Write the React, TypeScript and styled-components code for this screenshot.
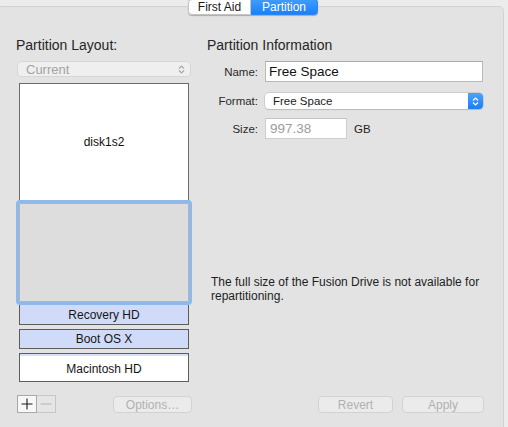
import React from "react";
import styled, { createGlobalStyle } from "styled-components";

const Global = createGlobalStyle`
  html, body { margin: 0; padding: 0; background: #ececec; }
  body { font-family: "Liberation Sans", Arial, sans-serif; color: #1e1e1e; }
  * { box-sizing: border-box; }
`;

const Window = styled.div`
  position: relative;
  width: 508px;
  height: 427px;
  overflow: hidden;
  background: #ececec;
  padding-top: 6px;
`;

const Segmented = styled.div`
  position: absolute;
  top: -1px;
  left: 188px;
  display: flex;
  height: 16px;
  border-radius: 4px;
  box-shadow: 0 0.5px 1px rgba(0, 0, 0, 0.25);
`;

const Segment = styled.div<{ $active?: boolean }>`
  display: flex;
  align-items: center;
  justify-content: center;
  width: ${(p) => (p.$active ? 67 : 63)}px;
  font-size: 12px;
  line-height: 16px;
  color: ${(p) => (p.$active ? "#ffffff" : "#1a1a1a")};
  background: ${(p) => (p.$active ? "linear-gradient(#3f9cfd, #1a80fb)" : "#ffffff")};
  border: 1px solid ${(p) => (p.$active ? "#2a86f5" : "#c4c4c4")};
  border-left-width: ${(p) => (p.$active ? 0 : 1)}px;
  border-radius: ${(p) => (p.$active ? "0 4px 4px 0" : "4px 0 0 4px")};
`;

const Panel = styled.div`
  margin-left: -4px;
  width: 508px;
  height: 440px;
  border: 1px solid #d2d2d2;
  border-radius: 5px;
  background: #e3e3e3;
  display: flex;
  padding: 30px 0 0 19px;
`;

const LeftCol = styled.div`
  flex: none;
  width: 176px;
  display: flex;
  flex-direction: column;
`;

const RightCol = styled.div`
  flex: none;
  width: 296px;
  margin-left: 15px;
  padding-right: 19px;
  display: flex;
  flex-direction: column;
`;

const Heading = styled.div`
  font-size: 14px;
  line-height: 16px;
  height: 16px;
  color: #262626;
  white-space: nowrap;
`;

const DisabledPopup = styled.div`
  margin: 8px 0 0 1px;
  width: 174px;
  height: 16px;
  display: flex;
  align-items: center;
  justify-content: space-between;
  padding: 0 5px 0 8px;
  background: #efefef;
  border: 1px solid #d6d6d6;
  border-radius: 4px;
  font-size: 13px;
  color: #a3a3a3;
`;

const Map = styled.div`
  margin: 6px 0 0 3px;
  width: 170px;
  display: flex;
  flex-direction: column;
`;

const DiskBox = styled.div`
  height: 117px;
  background: #ffffff;
  border: 1px solid #6b6b6b;
  border-bottom: none;
  display: flex;
  align-items: center;
  justify-content: center;
  font-size: 12px;
  color: #111;
`;

const SelectedBox = styled.div`
  margin: 0 -3px;
  height: 105px;
  border: 3px solid #8fb8eb;
  border-radius: 4px;
  background: #dddddd;
  box-shadow: inset 0 0 0 1px #b4b4b4;
`;

const PartRow = styled.div<{ $h: number; $top?: boolean; $white?: boolean; $gap?: number }>`
  margin-top: ${(p) => p.$gap ?? 0}px;
  height: ${(p) => p.$h}px;
  display: flex;
  align-items: center;
  justify-content: center;
  font-size: 12px;
  color: #151515;
  background: ${(p) => (p.$white ? "#ffffff" : "#d0dbfa")};
  border: 1px solid #5c5c5c;
  border-top-width: ${(p) => (p.$top ? 1 : 0)}px;
  box-shadow: ${(p) => (p.$white ? "inset 0 2px 0 #d6e0fb" : "none")};
  padding-top: ${(p) => (p.$white ? 2 : 0)}px;
`;

const LeftFooter = styled.div`
  margin-top: 13px;
  display: flex;
  justify-content: space-between;
  align-items: flex-start;
`;

const PlusMinus = styled.div`
  margin-left: 1px;
  display: flex;
`;

const SquareBtn = styled.div<{ $enabled?: boolean }>`
  width: ${(p) => (p.$enabled ? 20 : 19)}px;
  height: 18px;
  display: flex;
  align-items: center;
  justify-content: center;
  background: ${(p) => (p.$enabled ? "#f7f7f7" : "#e5e5e5")};
  border: 1px solid ${(p) => (p.$enabled ? "#a8a8a8" : "#c6c6c6")};
  border-left-width: ${(p) => (p.$enabled ? 1 : 0)}px;
`;

const PushButton = styled.div<{ $w: number }>`
  width: ${(p) => p.$w}px;
  height: 17px;
  margin-top: 1px;
  display: flex;
  align-items: center;
  justify-content: center;
  background: #ebebeb;
  border: 1px solid #d2d2d2;
  border-radius: 4px;
  font-size: 12px;
  color: #b1b1b1;
`;

const Form = styled.div`
  margin-top: 8px;
  display: grid;
  grid-template-columns: 51px 218px;
  column-gap: 7px;
  align-items: center;
`;

const Label = styled.div<{ $gap?: number }>`
  margin-top: ${(p) => p.$gap ?? 0}px;
  text-align: right;
  font-size: 11.5px;
  color: #2a2a2a;
`;

const Cell = styled.div<{ $gap?: number }>`
  margin-top: ${(p) => p.$gap ?? 0}px;
  display: flex;
  align-items: center;
`;

const TextField = styled.div<{ $w?: number; $dim?: boolean }>`
  width: ${(p) => (p.$w ? `${p.$w}px` : "100%")};
  height: 21px;
  display: flex;
  align-items: center;
  padding-left: ${(p) => (p.$dim ? 4 : 3)}px;
  background: #ffffff;
  border: 1px solid ${(p) => (p.$dim ? "#cfcfcf" : "#b9b9b9")};
  border-top-color: ${(p) => (p.$dim ? "#c4c4c4" : "#a9a9a9")};
  font-size: 13.5px;
  color: ${(p) => (p.$dim ? "#9c9c9c" : "#111")};
`;

const Popup = styled.div`
  width: 100%;
  height: 16px;
  display: flex;
  align-items: stretch;
  background: #ffffff;
  border-radius: 4px;
  box-shadow: 0 0 0 0.5px #b7b7b7, 0 1px 1px rgba(0, 0, 0, 0.15);
  font-size: 11.5px;
  color: #1a1a1a;
`;

const PopupText = styled.div`
  flex: 1;
  display: flex;
  align-items: center;
  padding-left: 8px;
`;

const Stepper = styled.div`
  width: 15px;
  display: flex;
  align-items: center;
  justify-content: center;
  border-radius: 0 4px 4px 0;
  background: linear-gradient(#4aa3fd, #1a7ef8);
`;

const Unit = styled.span`
  margin-left: 7px;
  font-size: 11.5px;
  color: #222;
`;

const Message = styled.div`
  margin: 137px 0 0 4px;
  width: 273px;
  font-size: 12px;
  line-height: 13.5px;
  color: #1e1e1e;
`;

const RightFooter = styled.div`
  margin-top: 92px;
  display: flex;
  justify-content: flex-end;
  gap: 9px;
`;

const Chevrons = ({ color }: { color: string }) => (
  <svg width="7" height="11" viewBox="0 0 7 11">
    <path d="M1 4.5 L3.5 2 L6 4.5 M1 6.5 L3.5 9 L6 6.5" fill="none" stroke={color} strokeWidth="1.2" />
  </svg>
);

export default function App() {
  return (
    <>
      <Global />
      <Window>
        <Panel>
          <LeftCol>
            <Heading>Partition Layout:</Heading>
            <DisabledPopup>
              <span>Current</span>
              <Chevrons color="#a8a8a8" />
            </DisabledPopup>
            <Map>
              <DiskBox>disk1s2</DiskBox>
              <SelectedBox />
              <PartRow $h={20}>Recovery HD</PartRow>
              <PartRow $h={20} $top $gap={4}>Boot OS X</PartRow>
              <PartRow $h={29} $top $white $gap={4}>Macintosh HD</PartRow>
            </Map>
            <LeftFooter>
              <PlusMinus>
                <SquareBtn $enabled>
                  <svg width="12" height="12" viewBox="0 0 12 12">
                    <path d="M6 0.5 V11.5 M0.5 6 H11.5" stroke="#1a1a1a" strokeWidth="1.1" />
                  </svg>
                </SquareBtn>
                <SquareBtn>
                  <svg width="12" height="12" viewBox="0 0 12 12">
                    <path d="M0.5 6 H11.5" stroke="#b9b9b9" strokeWidth="1.1" />
                  </svg>
                </SquareBtn>
              </PlusMinus>
              <PushButton $w={79}>Options…</PushButton>
            </LeftFooter>
          </LeftCol>
          <RightCol>
            <Heading>Partition Information</Heading>
            <Form>
              <Label>Name:</Label>
              <Cell>
                <TextField>Free Space</TextField>
              </Cell>
              <Label $gap={11}>Format:</Label>
              <Cell $gap={11}>
                <Popup>
                  <PopupText>Free Space</PopupText>
                  <Stepper>
                    <Chevrons color="#ffffff" />
                  </Stepper>
                </Popup>
              </Cell>
              <Label $gap={9}>Size:</Label>
              <Cell $gap={9}>
                <TextField $w={82} $dim>997.38</TextField>
                <Unit>GB</Unit>
              </Cell>
            </Form>
            <Message>The full size of the Fusion Drive is not available for repartitioning.</Message>
            <RightFooter>
              <PushButton $w={75}>Revert</PushButton>
              <PushButton $w={82}>Apply</PushButton>
            </RightFooter>
          </RightCol>
        </Panel>
        <Segmented>
          <Segment>First Aid</Segment>
          <Segment $active>Partition</Segment>
        </Segmented>
      </Window>
    </>
  );
}
